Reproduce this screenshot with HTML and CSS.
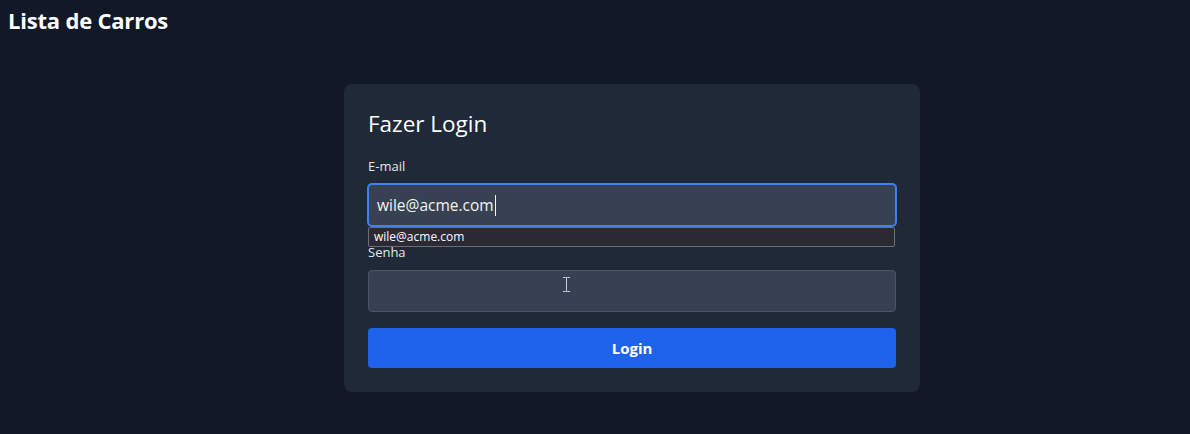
FILE: index.html
```html
<!DOCTYPE html>
<html lang="pt-BR">
<head>
<meta charset="utf-8">
<title>Lista de Carros</title>
<link rel="stylesheet" href="styles.css">
</head>
<body>
<header class="topbar">
  <h1 class="brand">Lista de Carros</h1>
</header>
<main class="main">
  <section class="card">
    <h2 class="card-title">Fazer Login</h2>
    <form class="form">
      <div class="field">
        <label class="label" for="email">E-mail</label>
        <div class="input-wrap">
          <div class="input is-focused" id="email" role="textbox"><span class="value">wile@acme.com</span><span class="caret"></span></div>
          <div class="autocomplete">wile@acme.com</div>
        </div>
      </div>
      <div class="field">
        <label class="label" for="senha">Senha</label>
        <div class="input-wrap">
          <input class="input" id="senha" type="password">
          <svg class="ibeam" width="9" height="17" viewBox="0 0 9 17" aria-hidden="true">
            <path d="M1 1.5h2.5M5.5 1.5H8M4.5 2v13M1 15.5h2.5M5.5 15.5H8M3.5 1.5h2M3.5 15.5h2" stroke="#c8ccd4" stroke-width="1" fill="none"/>
          </svg>
        </div>
      </div>
      <button class="btn" type="button">Login</button>
    </form>
  </section>
</main>
</body>
</html>
```
FILE: styles.css
```css
* { box-sizing: border-box; }
html, body { margin: 0; padding: 0; }
body {
  background: #111827;
  color: #f9fafb;
  font-family: "Open Sans", "Noto Sans", "DejaVu Sans", sans-serif;
  width: 1190px;
  height: 434px;
  overflow: hidden;
}
.topbar { padding: 4px 8px 0; }
.brand {
  margin: 0;
  font-size: 22px;
  line-height: 32px;
  font-weight: 700;
  color: #ffffff;
  letter-spacing: -0.2px;
}
.main {
  margin-top: 48px;
  display: flex;
  justify-content: flex-start;
  padding-left: 344px;
}
.card {
  width: 576px;
  background: #1f2937;
  border-radius: 8px;
  padding: 24px;
}
.card-title {
  margin: 0 0 16px;
  font-size: 22.5px;
  line-height: 32px;
  font-weight: 400;
  color: #ffffff;
}
.form { display: flex; flex-direction: column; }
.field { display: flex; flex-direction: column; margin-bottom: 16px; }
.label {
  font-size: 13px;
  line-height: 20px;
  color: #e5e7eb;
  margin-bottom: 8px;
}
.input-wrap { position: relative; }
.input {
  display: flex;
  align-items: center;
  width: 100%;
  height: 42px;
  padding: 0 8px;
  background: #374151;
  border: 1px solid #4b5563;
  border-radius: 4px;
  color: #f3f4f6;
  font-family: inherit;
  font-size: 15.5px;
  outline: none;
}
.input.is-focused {
  border-color: #3b82f6;
  box-shadow: 0 0 0 1px #3b82f6;
}
.value { white-space: pre; }
.caret {
  display: inline-block;
  width: 1px;
  height: 21px;
  background: #f3f4f6;
  margin-left: 1px;
}
.autocomplete {
  position: absolute;
  left: 0;
  right: 1px;
  top: 43px;
  height: 20px;
  background: #2b2a33;
  border: 1px solid #6e6d75;
  border-radius: 2px;
  color: #fbfbfe;
  font-size: 12px;
  line-height: 18px;
  padding-left: 5px;
  z-index: 2;
}
.ibeam {
  position: absolute;
  left: 194px;
  top: 6px;
}
.btn {
  height: 40px;
  border: 0;
  border-radius: 4px;
  background: #1f63ed;
  color: #ffffff;
  font-family: inherit;
  font-size: 15px;
  font-weight: 700;
  cursor: pointer;
}
```
